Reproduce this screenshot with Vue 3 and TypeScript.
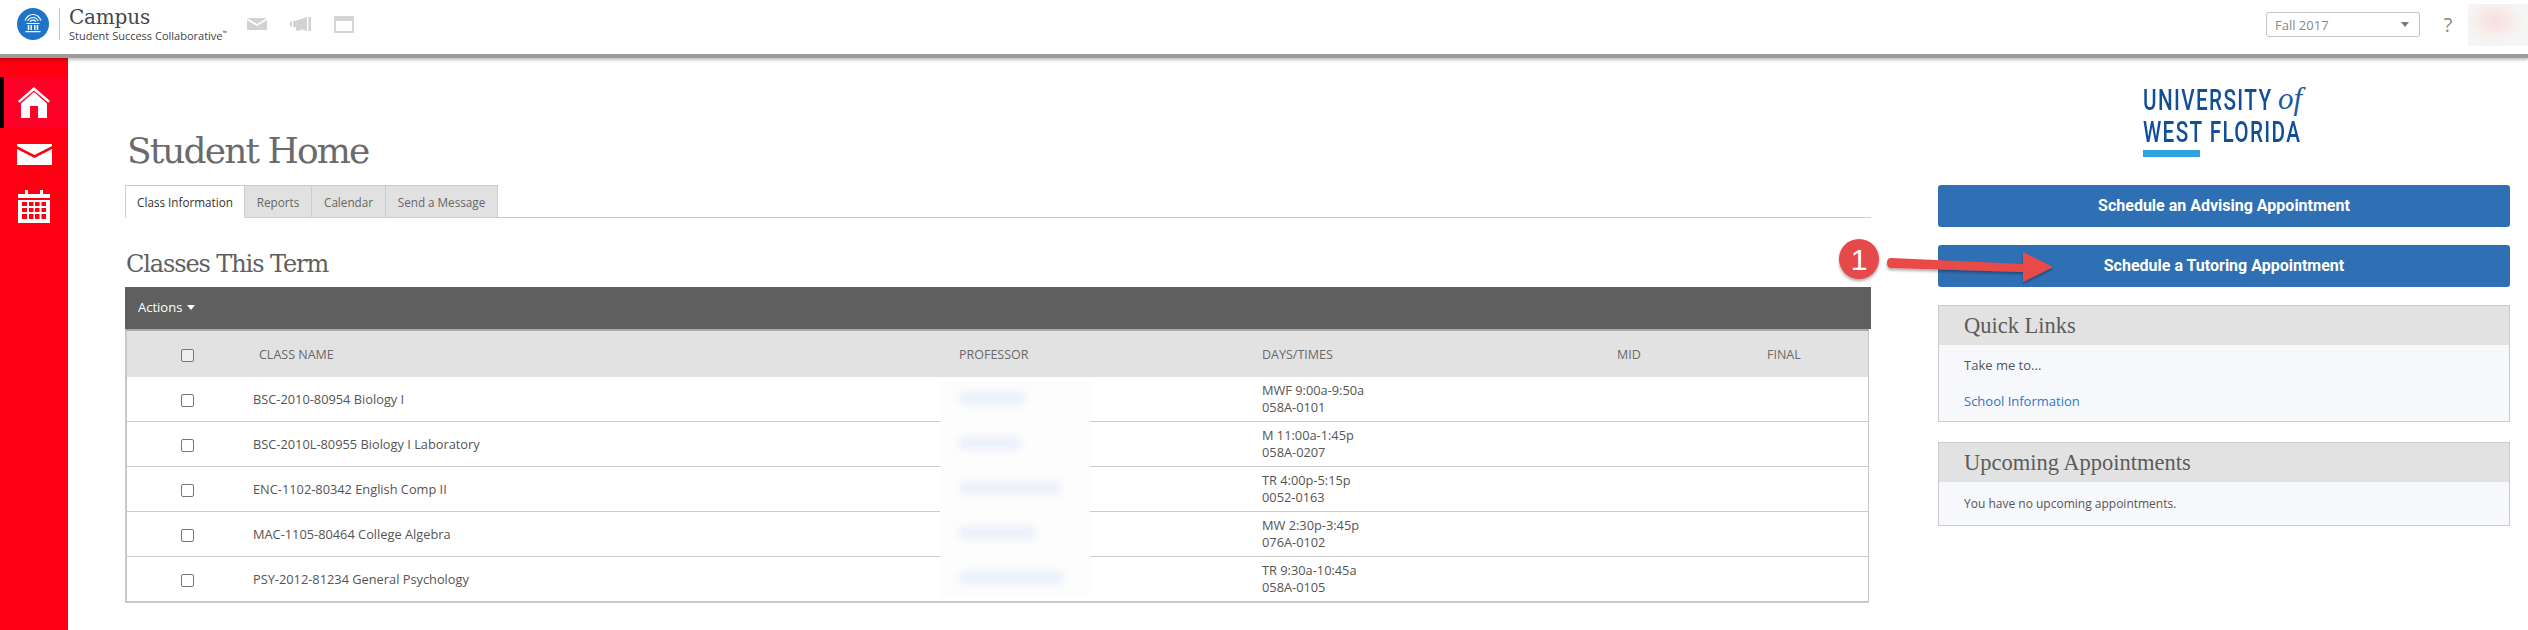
<script setup lang="ts">
interface Row { name: string; slot: string; room: string; blur: number }
const rows: Row[] = [
  { name: 'BSC-2010-80954 Biology I', slot: 'MWF 9:00a-9:50a', room: '058A-0101', blur: 65 },
  { name: 'BSC-2010L-80955 Biology I Laboratory', slot: 'M 11:00a-1:45p', room: '058A-0207', blur: 60 },
  { name: 'ENC-1102-80342 English Comp II', slot: 'TR 4:00p-5:15p', room: '0052-0163', blur: 100 },
  { name: 'MAC-1105-80464 College Algebra', slot: 'MW 2:30p-3:45p', room: '076A-0102', blur: 75 },
  { name: 'PSY-2012-81234 General Psychology', slot: 'TR 9:30a-10:45a', room: '058A-0105', blur: 103 }
]
const tabs = ['Class Information', 'Reports', 'Calendar', 'Send a Message']
</script>

<template>
  <div class="page">
    <header class="top">
      <svg class="seal" width="32" height="32" viewBox="0 0 32 32">
        <circle cx="16" cy="16" r="16" fill="#1f74c8" />
        <path d="M8 12.500C10 8 13 6.500 16 6.500s6 1.500 8 6M10.500 13C12 10.500 14 9.500 16 9.500s4 1 5.500 3.500M13 13.500c1-1 2-1.300 3-1.300s2 .3 3 1.300" fill="none" stroke="#fff" stroke-width="1.200" />
        <path d="M9.500 15h13v1h-13zM10.800 17h1.500v5h-1.500zM13.500 17H15v5h-1.500zM17 17h1.500v5H17zM19.700 17h1.500v5h-1.500zM8.500 23h15v1.200h-15z" fill="#fff" />
      </svg>
      <div class="brand">
        <div class="brand-name">Campus</div>
        <div class="brand-sub">Student Success Collaborative<sup>™</sup></div>
      </div>
      <div class="tools">
        <svg width="20" height="12" viewBox="0 0 20 12"><path d="M0 0h20L10 6zM0 2l10 6 10-6v10H0z" fill="#d2d2d2" /></svg>
        <svg width="21" height="14" viewBox="0 0 21 14"><path d="M0 4.500h2v5H0zM3 4.500 17 0v14L3 9.500zM18.500 0H21v14h-2.500zM6 10.500l5 1.500v1.500H6z" fill="#d2d2d2" /></svg>
        <svg width="20" height="17" viewBox="0 0 20 17"><path d="M0 0h20v17H0zM2 5v10h16V5z" fill="#d6d6d6" fill-rule="evenodd" /></svg>
      </div>
      <div class="term"><span>Fall 2017</span><i class="caret"></i></div>
      <div class="help">?</div>
      <div class="avatar"></div>
    </header>

    <div class="body">
      <nav class="rail">
        <a class="rail-item active">
          <svg width="32" height="31" viewBox="0 0 32 31"><path d="M16 0 32 14l-1.600 1.800L16 3.400 1.600 15.800 0 14zM3 16.500 16 5l13 11.500V31H20V19h-8v12H3z" fill="#fff" /></svg>
        </a>
        <a class="rail-item">
          <svg width="35" height="21" viewBox="0 0 35 21"><path d="M0 0h35v2L17.500 11 0 2zM0 5l17.500 9L35 5v16H0z" fill="#fff" /></svg>
        </a>
        <a class="rail-item">
          <svg width="32" height="33" viewBox="0 0 32 33"><path fill-rule="evenodd" fill="#fff" d="M7 0h3v4h12V0h3v4h7v4H0V4h7zM0 10h32v23H0zM4 12v4h5v-4zM11 12v4h4.500v-4zM17 12v4h4.500v-4zM23.500 12v4H28v-4zM4 18v4h5v-4zM11 18v4h4.500v-4zM17 18v4h4.500v-4zM23.500 18v4H28v-4zM4 24v5h5v-5zM11 24v5h4.500v-5zM17 24v5h4.500v-5zM23.500 24v5H28v-5z" /></svg>
        </a>
      </nav>

      <main class="main">
        <h1 class="title">Student Home</h1>
        <div class="tabs">
          <div v-for="(t, i) in tabs" :key="t" class="tab" :class="{ on: i === 0 }">{{ t }}</div>
        </div>
        <h2 class="section">Classes This Term</h2>
        <div class="actions">Actions <i class="caret light"></i></div>
        <div class="grid">
          <div class="row head">
            <div class="c-check"><span class="box"></span></div>
            <div class="c-name pad">CLASS NAME</div>
            <div class="c-prof">PROFESSOR</div>
            <div class="c-time">DAYS/TIMES</div>
            <div class="c-mid">MID</div>
            <div class="c-final">FINAL</div>
          </div>
          <div v-for="r in rows" :key="r.name" class="row item">
            <div class="c-check"><span class="box"></span></div>
            <div class="c-name">{{ r.name }}</div>
            <div class="c-prof"></div>
            <div class="c-time">{{ r.slot }}<br />{{ r.room }}</div>
            <div class="c-mid"></div>
            <div class="c-final"></div>
          </div>
          <div class="mask">
            <div v-for="r in rows" :key="r.name" class="smear-line">
              <span class="smear" :style="{ width: r.blur + 'px' }"></span>
            </div>
          </div>
        </div>
      </main>

      <aside class="side">
        <div class="logo">
          <div class="logo-l1"><span class="logo-word">UNIVERSITY</span><em>of</em></div>
          <div class="logo-l2"><span class="logo-word">WEST FLORIDA</span></div>
          <div class="logo-bar"></div>
        </div>
        <button class="cta">Schedule an Advising Appointment</button>
        <button class="cta">Schedule a Tutoring Appointment</button>
        <section class="panel">
          <h3>Quick Links</h3>
          <div class="panel-body links">
            <div>Take me to...</div>
            <a>School Information</a>
          </div>
        </section>
        <section class="panel">
          <h3>Upcoming Appointments</h3>
          <div class="panel-body">You have no upcoming appointments.</div>
        </section>

        <svg class="callout" width="225" height="60" viewBox="0 0 225 60">
          <defs>
            <filter id="sh" x="-10%" y="-20%" width="120%" height="150%">
              <feDropShadow dx="0" dy="2" stdDeviation="1.500" flood-color="#000" flood-opacity=".35" />
            </filter>
          </defs>
          <circle cx="21" cy="24" r="20" fill="#e54848" filter="url(#sh)" />
          <text x="21" y="35" text-anchor="middle" class="num">1</text>
          <path d="M53 23 185 29V17l30 15-30 15V37L53 33Q49 33 49 28T53 23Z" fill="#e94a46" filter="url(#sh)" />
        </svg>
      </aside>
    </div>
  </div>
</template>

<style>
html, body { margin: 0; background: #fff; overflow: hidden; }
</style>

<style scoped>
.page { width: 2528px; height: 630px; overflow: hidden; font-family: "Open Sans", sans-serif; color: #555; background: #fff; }

.top { height: 54px; display: flex; align-items: center; padding-left: 17px; border-bottom: 4px solid #9c9c9c; box-shadow: 0 2px 3px rgba(0,0,0,.25); position: relative; z-index: 2; background: #fff; }
.seal { flex: none; margin-top: -6px; }
.brand { flex: none; width: 157px; margin-left: 10px; padding-left: 9px; border-left: 1px solid #c8c8c8; height: 32px; margin-top: -6px; }
.brand-name { font-family: "DejaVu Serif", serif; font-size: 20px; line-height: 24px; color: #3f4650; margin-top: -3px; letter-spacing: -.2px; }
.brand-sub { font-size: 11px; line-height: 14px; color: #444; white-space: nowrap; }
.brand-sub sup { font-size: 6px; line-height: 0; }
.tools { display: flex; align-items: center; gap: 23px; margin-left: 21px; margin-top: -6px; }
.term { margin-left: auto; width: 134px; height: 23px; border: 1px solid #c4c4c4; border-radius: 3px; display: flex; align-items: center; justify-content: space-between; padding: 0 10px 0 8px; font-size: 13px; color: #888; margin-top: -5px; }
.caret { width: 0; height: 0; border: 4px solid transparent; border-top: 5px solid #777; border-bottom: 0; display: inline-block; }
.caret.light { border-top-color: #fff; margin-left: 1px; vertical-align: 2px; }
.help { width: 18px; margin-left: 19px; font-size: 20px; color: #8a8a8a; text-align: center; margin-top: -6px; }
.avatar { width: 60px; height: 42px; margin-left: 11px; background: radial-gradient(ellipse 30px 22px at 45% 40%, #f8dedc 0, #f7efee 70%, #f5f5f5 100%); margin-top: -4px; }

.body { display: flex; height: 572px; }
.rail { width: 68px; flex: none; background: #ff0012; padding-top: 19px; box-sizing: border-box; display: flex; flex-direction: column; gap: 1px; }
.rail-item { height: 51px; display: flex; align-items: center; justify-content: center; box-sizing: border-box; }
.rail-item.active { background: #ff0029; box-shadow: inset 4px 0 0 #000; }

.main { width: 1746px; margin-left: 57px; flex: none; }
.title { margin: 70px 0 0 2px; font: 400 36px/46px "DejaVu Serif", serif; letter-spacing: -1.900px; color: #6a6a6a; height: 46px; }
.tabs { display: grid; grid-template-columns: 120px 67px 74px 112px; margin-top: 11px; height: 32px; border-bottom: 1px solid #ccc; }
.tab { height: 33px; box-sizing: border-box; background: #e1e1e1; border: 1px solid #ccc; border-left: 0; font-size: 11.700px; line-height: 33px; color: #666; text-align: center; }
.tab.on { background: #fff; color: #333; border-left: 1px solid #ccc; border-bottom-color: #fff; }
.section { margin: 30px 0 0 1px; font: 400 24px/32px "DejaVu Serif", serif; letter-spacing: -1.100px; color: #5f5f5f; height: 39px; }
.actions { height: 42px; background: #5f5f5f; color: #fff; font-size: 13px; line-height: 40px; padding-left: 13px; }
.grid { position: relative; margin-right: 2px; border: 2px solid #c8c8c8; border-top-color: #aaa; border-right-width: 1px; box-sizing: border-box; height: 274px; }
.row { display: flex; align-items: center; }
.head { height: 46px; background: #e2e2e2; font-size: 12.500px; color: #6a6a6a; }
.item { height: 45px; border-bottom: 1px solid #ccc; box-sizing: border-box; font-size: 12.800px; color: #555; line-height: 17px; }
.item:nth-child(6) { height: 44px; border-bottom: 0; }
.c-check { width: 126px; flex: none; padding-left: 54px; box-sizing: border-box; display: flex; }
.box { width: 13px; height: 13px; box-sizing: border-box; border: 1px solid #777; border-radius: 2px; background: #fff; display: block; margin-top: 3px; }
.head .box { background: #eee; margin-top: 2px; }
.c-name { width: 706px; flex: none; }
.c-name.pad { padding-left: 6px; box-sizing: border-box; }
.c-prof { width: 303px; flex: none; }
.c-time { width: 355px; flex: none; }
.c-mid { width: 150px; flex: none; }
.c-final { flex: 1; }
.mask { position: absolute; left: 813px; top: 50px; width: 150px; height: 217px; background: #fdfdfd; }
.smear-line { height: 45px; box-sizing: border-box; display: flex; align-items: flex-start; padding: 11px 0 0 20px; }
.smear { height: 12px; background: #e8eef9; filter: blur(4px); display: block; }

.side { width: 572px; margin-left: 67px; flex: none; position: relative; }
.logo { height: 127px; box-sizing: border-box; padding-top: 26px; padding-left: 205px; color: #114f97; font-family: Roboto, sans-serif; font-weight: 500; font-size: 30px; line-height: 32px; letter-spacing: 2px; white-space: nowrap; }
.logo-l1 { display: flex; height: 32px; }
.logo-word { display: block; width: 129px; transform: scaleX(.69); transform-origin: left center; }
.logo em { font: italic 400 31px/30px "Liberation Serif", serif; letter-spacing: 0; margin-left: 6px; color: #1f5aa0; }
.logo-bar { width: 57px; height: 7px; background: #2ea3df; margin-top: 2px; }
.cta { display: block; width: 100%; height: 42px; margin-bottom: 18px; background: #2f70b5; border: 0; border-radius: 3px; color: #fff; font: 700 16px/42px Roboto, sans-serif; padding: 0; }
.panel { border: 1px solid #ccc; background: #f7f8fc; margin-bottom: 20px; box-sizing: border-box; }
.panel h3 { margin: 0; height: 39px; background: #e2e2e2; font: 400 22.500px/39px "Liberation Serif", serif; color: #5c5c5c; padding-left: 25px; }
.panel-body { padding: 14px 25px 13px; font-size: 12px; line-height: 16px; color: #555; }
.links { padding: 12px 25px; height: 76px; box-sizing: border-box; display: flex; flex-direction: column; gap: 20px; font-size: 13px; }
.links a { color: #2f76c8; }
.callout { position: absolute; left: -100px; top: 177px; }
.num { font: 400 30px "Liberation Sans", sans-serif; fill: #fff; }
</style>
